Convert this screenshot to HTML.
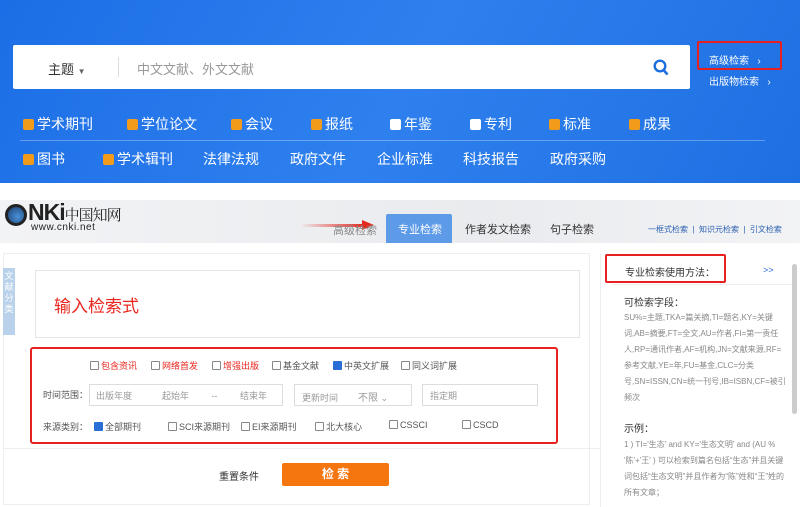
<!DOCTYPE html><html><head><meta charset="utf-8"><style>
*{margin:0;padding:0;box-sizing:border-box}
body{width:800px;height:507px;overflow:hidden;font-family:"Liberation Sans","Noto Sans CJK SC",sans-serif;background:#fff;position:relative}
.a{position:absolute;white-space:nowrap}
.hdr{left:0;top:0;width:800px;height:183px;background:linear-gradient(120deg,#1c6ee6,#2f80ee 50%,#1e6fe2)}
.cb{display:inline-block;width:11px;height:11px;background:#f29b1b;border-radius:2px;vertical-align:-1px;margin-right:3px;position:relative}
.cb.w{background:#fff}
.wt{color:#fff;font-size:14px}
.sq{display:inline-block;width:9px;height:9px;border:1px solid #888;border-radius:1px;vertical-align:-1px;margin-right:2px;background:#fff}
.sq.c{background:#2a6fd6;border-color:#2a6fd6}
.sm{font-size:9px;color:#555}
.fld{border:1px solid #ddd;height:22px;background:#fff}
</style></head><body>
<div class="a hdr"></div>
<div class="a" style="left:13px;top:45px;width:677px;height:44px;background:#fff;border-radius:2px"></div>
<div class="a" style="left:48px;top:59px;font-size:13px;color:#333">主题 <span style="font-size:8px;color:#666">▼</span></div>
<div class="a" style="left:118px;top:57px;width:1px;height:20px;background:#ddd"></div>
<div class="a" style="left:137px;top:59px;font-size:13px;color:#999">中文文献、外文文献</div>
<svg class="a" style="left:653px;top:59px" width="16" height="17" viewBox="0 0 16 17"><circle cx="7" cy="7" r="5.3" fill="none" stroke="#1d6fe0" stroke-width="2.4"/><path d="M10.5 11l4 4.5" stroke="#1d6fe0" stroke-width="2.6"/></svg>
<div class="a" style="left:697px;top:41px;width:85px;height:29px;border:2px solid #e8201f;border-radius:2px"></div>
<div class="a" style="left:709px;top:52px;font-size:10px;color:#fff">高级检索 &nbsp;&nbsp;›</div>
<div class="a" style="left:709px;top:73px;font-size:10px;color:#fff">出版物检索 &nbsp;&nbsp;›</div>
<div class="a wt" style="left:23px;top:114px"><span class="cb"></span>学术期刊</div>
<div class="a wt" style="left:127px;top:114px"><span class="cb"></span>学位论文</div>
<div class="a wt" style="left:231px;top:114px"><span class="cb"></span>会议</div>
<div class="a wt" style="left:311px;top:114px"><span class="cb"></span>报纸</div>
<div class="a wt" style="left:390px;top:114px"><span class="cb w"></span>年鉴</div>
<div class="a wt" style="left:470px;top:114px"><span class="cb w"></span>专利</div>
<div class="a wt" style="left:549px;top:114px"><span class="cb"></span>标准</div>
<div class="a wt" style="left:629px;top:114px"><span class="cb"></span>成果</div>
<div class="a" style="left:20px;top:140px;width:745px;height:1px;background:rgba(255,255,255,.3)"></div>
<div class="a wt" style="left:23px;top:149px"><span class="cb"></span>图书</div>
<div class="a wt" style="left:103px;top:149px"><span class="cb"></span>学术辑刊</div>
<div class="a wt" style="left:203px;top:149px">法律法规</div>
<div class="a wt" style="left:290px;top:149px">政府文件</div>
<div class="a wt" style="left:377px;top:149px">企业标准</div>
<div class="a wt" style="left:463px;top:149px">科技报告</div>
<div class="a wt" style="left:550px;top:149px">政府采购</div>
<div class="a" style="left:0;top:200px;width:800px;height:43px;background:linear-gradient(90deg,#f2f3f5,#e9ebee 60%,#f2f3f5)"></div>
<div class="a" style="left:5px;top:204px;width:22px;height:22px;border-radius:50%;background:radial-gradient(circle at 60% 60%,#4a90d9,#1a3f6d);border:3px solid #222"></div>
<div class="a" style="left:28px;top:199px;font-size:23px;font-weight:bold;color:#222;letter-spacing:-1px">NKi<span style="font-size:15px;font-family:'Noto Serif CJK SC',serif;font-weight:normal">中国知网</span></div>
<div class="a" style="left:31px;top:222px;font-size:10px;color:#222;letter-spacing:.5px">www.cnki.net</div>
<div class="a" style="left:300px;top:224px;width:65px;height:3px;background:linear-gradient(90deg,rgba(230,40,30,0),#e6281e)"></div>
<div class="a" style="left:362px;top:220px;border-left:12px solid #e6281e;border-top:5px solid transparent;border-bottom:5px solid transparent"></div>
<div class="a" style="left:333px;top:222px;font-size:11px;color:#888">高级检索</div>
<div class="a" style="left:386px;top:214px;width:66px;height:29px;background:#5d9ae8;border-radius:2px 2px 0 0"></div>
<div class="a" style="left:398px;top:221px;font-size:11px;color:#fff">专业检索</div>
<div class="a" style="left:465px;top:221px;font-size:11px;color:#333">作者发文检索</div>
<div class="a" style="left:550px;top:221px;font-size:11px;color:#333">句子检索</div>
<div class="a" style="left:648px;top:224px;font-size:8px;color:#2a5fb0">一框式检索 &nbsp;|&nbsp; 知识元检索 &nbsp;|&nbsp; 引文检索</div>
<div class="a" style="left:3px;top:253px;width:587px;height:252px;border:1px solid #eee;background:#fff"></div>
<div class="a" style="left:3px;top:268px;width:12px;height:67px;background:#b9d1ea;color:#fff;font-size:9px;line-height:11px;text-align:center;white-space:normal;padding-top:3px">文献分类</div>
<div class="a" style="left:35px;top:270px;width:545px;height:68px;border:1px solid #e5e5e5"></div>
<div class="a" style="left:54px;top:292px;font-size:17px;color:#e8261e">输入检索式</div>
<div class="a" style="left:30px;top:347px;width:528px;height:97px;border:2px solid #e8201f;border-radius:3px"></div>
<div class="a sm" style="left:90px;top:359px;color:#e8261e"><span class="sq"></span>包含资讯</div>
<div class="a sm" style="left:151px;top:359px;color:#e8261e"><span class="sq"></span>网络首发</div>
<div class="a sm" style="left:212px;top:359px;color:#e8261e"><span class="sq"></span>增强出版</div>
<div class="a sm" style="left:272px;top:359px"><span class="sq"></span>基金文献</div>
<div class="a sm" style="left:333px;top:359px"><span class="sq c"></span>中英文扩展</div>
<div class="a sm" style="left:401px;top:359px"><span class="sq"></span>同义词扩展</div>
<div class="a sm" style="left:43px;top:388px">时间范围：</div>
<div class="a fld" style="left:89px;top:384px;width:194px"></div>
<div class="a sm" style="left:96px;top:389px;color:#999">出版年度 &nbsp;&nbsp;&nbsp;&nbsp;&nbsp;&nbsp;&nbsp;&nbsp;&nbsp;&nbsp;&nbsp;起始年 &nbsp;&nbsp;&nbsp;&nbsp;&nbsp;&nbsp;&nbsp;&nbsp;-- &nbsp;&nbsp;&nbsp;&nbsp;&nbsp;&nbsp;&nbsp;&nbsp;结束年</div>
<div class="a fld" style="left:294px;top:384px;width:118px"></div>
<div class="a sm" style="left:302px;top:389px;color:#999">更新时间 &nbsp;&nbsp;&nbsp;&nbsp;&nbsp;&nbsp;&nbsp;<span style="font-size:10px">不限</span> ⌄</div>
<div class="a fld" style="left:422px;top:384px;width:116px"></div>
<div class="a sm" style="left:430px;top:389px;color:#999">指定期</div>
<div class="a sm" style="left:43px;top:420px">来源类别：</div>
<div class="a sm" style="left:94px;top:420px"><span class="sq c"></span>全部期刊</div>
<div class="a sm" style="left:168px;top:420px"><span class="sq"></span>SCI来源期刊</div>
<div class="a sm" style="left:241px;top:420px"><span class="sq"></span>EI来源期刊</div>
<div class="a sm" style="left:315px;top:420px"><span class="sq"></span>北大核心</div>
<div class="a sm" style="left:389px;top:420px"><span class="sq"></span>CSSCI</div>
<div class="a sm" style="left:462px;top:420px"><span class="sq"></span>CSCD</div>
<div class="a" style="left:3px;top:448px;width:797px;height:1px;background:#eee"></div>
<div class="a" style="left:219px;top:468px;font-size:10px;color:#333">重置条件</div>
<div class="a" style="left:282px;top:463px;width:107px;height:23px;background:#f5760f;border-radius:2px;color:#fff;font-size:12px;font-weight:bold;text-align:center;line-height:23px">检 索</div>
<div class="a" style="left:600px;top:253px;width:200px;height:254px;border-left:1px solid #eee;background:#fff"></div>
<div class="a" style="left:605px;top:254px;width:121px;height:29px;border:2px solid #e8201f;border-radius:2px"></div>
<div class="a" style="left:625px;top:264px;font-size:10px;color:#333">专业检索使用方法：</div>
<div class="a" style="left:763px;top:265px;font-size:9px;color:#2a6fd6">&gt;&gt;</div>
<div class="a" style="left:612px;top:284px;width:182px;height:1px;background:#eee"></div>
<div class="a" style="left:792px;top:264px;width:5px;height:150px;background:#ccc;border-radius:3px"></div>
<div class="a" style="left:624px;top:294px;font-size:10px;color:#333">可检索字段：</div>
<div class="a" style="left:624px;top:310px;width:165px;white-space:normal;font-size:8px;line-height:16px;color:#888">SU%=主题,TKA=篇关摘,TI=题名,KY=关键词,AB=摘要,FT=全文,AU=作者,FI=第一责任人,RP=通讯作者,AF=机构,JN=文献来源,RF=参考文献,YE=年,FU=基金,CLC=分类号,SN=ISSN,CN=统一刊号,IB=ISBN,CF=被引频次</div>
<div class="a" style="left:624px;top:420px;font-size:10px;color:#333">示例：</div>
<div class="a" style="left:624px;top:437px;width:165px;white-space:normal;font-size:8px;line-height:16px;color:#888">1 ) TI='生态' and KY='生态文明' and (AU % '陈'+'王' ) 可以检索到篇名包括“生态”并且关键词包括“生态文明”并且作者为“陈”姓和“王”姓的所有文章；</div>
</body></html>
